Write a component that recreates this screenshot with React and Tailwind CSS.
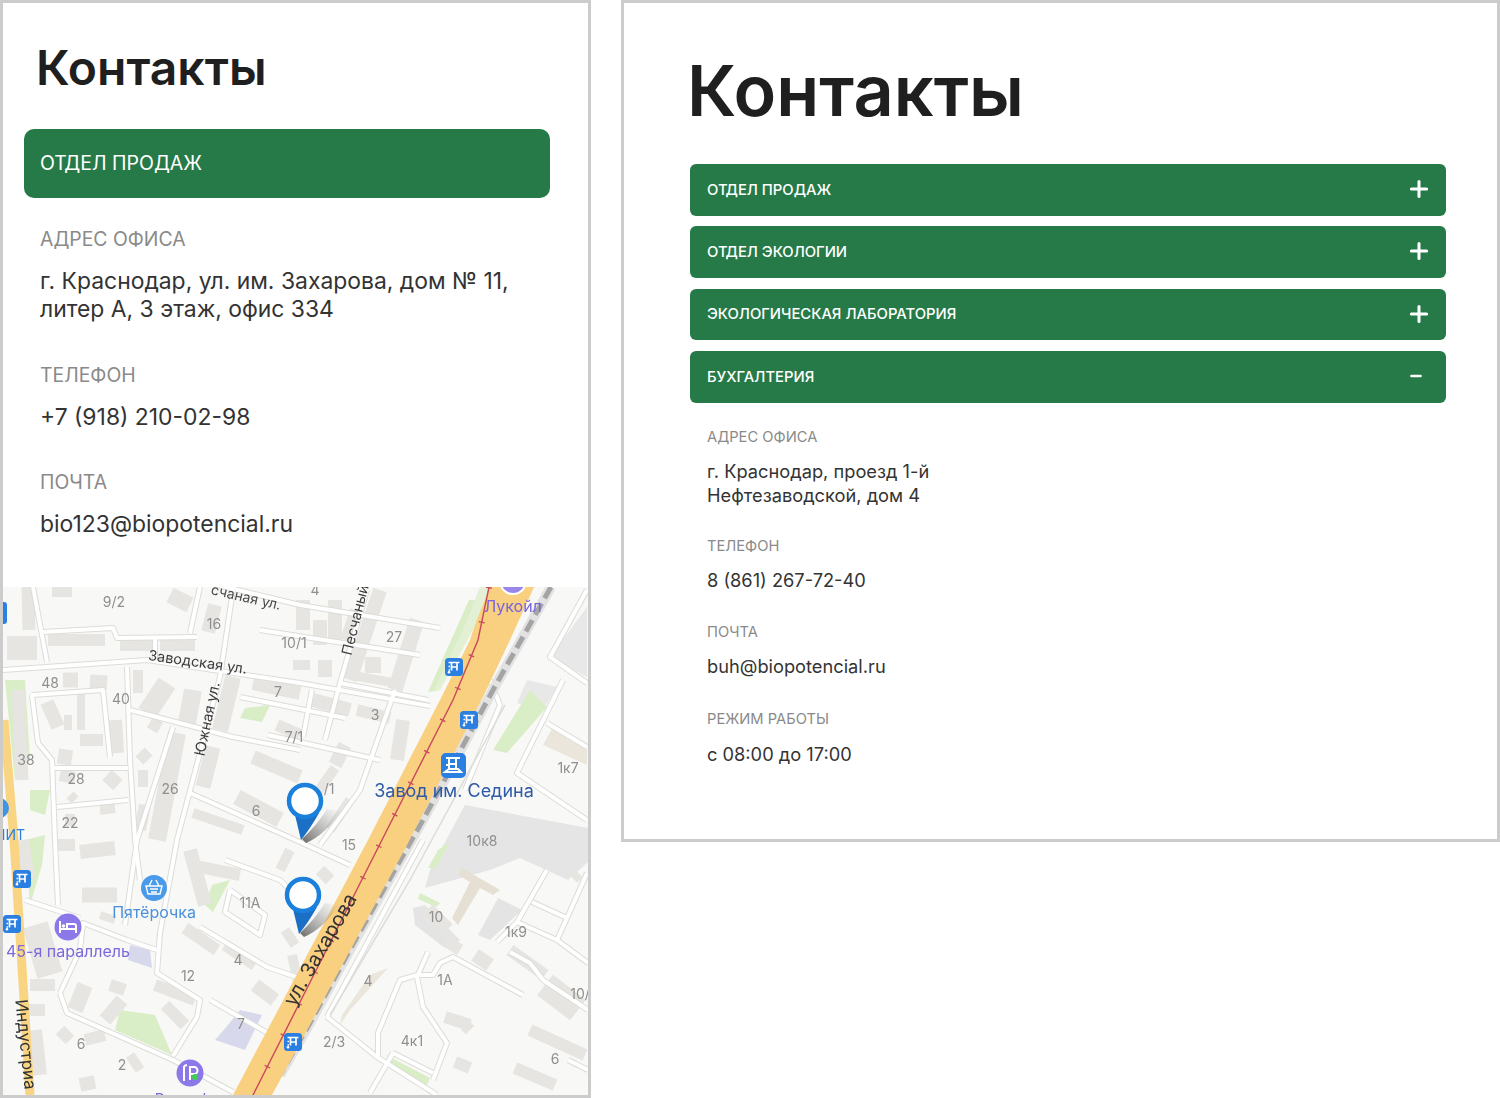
import React from 'react';
import { Plus, Minus } from 'lucide-react';

// thin streets, each one a list of screen points
const streets = [
  [[3, 670], [147, 660], [300, 683], [430, 706]],
  [[33, 587], [47, 662]],
  [[43, 632], [113, 628], [117, 638], [197, 637]],
  [[155, 638], [155, 660]],
  [[200, 587], [190, 633]],
  [[233, 590], [220, 677], [177, 840], [160, 933], [157, 973], [200, 1000], [197, 1017], [173, 1056]],
  [[60, 993], [67, 1013], [173, 1060], [233, 1092]],
  [[60, 993], [80, 950], [83, 923], [127, 940], [157, 950]],
  [[173, 727], [137, 840], [125, 925]],
  [[127, 667], [130, 760], [135, 840], [140, 880]],
  [[32, 695], [103, 690], [110, 757]],
  [[32, 695], [38, 743], [52, 760], [55, 840], [58, 905]],
  [[53, 768], [128, 768]],
  [[57, 807], [128, 800]],
  [[130, 710], [233, 737], [300, 750]],
  [[190, 793], [300, 842], [350, 865]],
  [[200, 927], [267, 967], [320, 985]],
  [[240, 697], [345, 718]],
  [[205, 582], [300, 605], [440, 628]],
  [[367, 590], [340, 683], [325, 740]],
  [[312, 690], [303, 737]],
  [[340, 683], [428, 700]],
  [[260, 630], [420, 655]],
  [[268, 735], [380, 760]],
  [[395, 690], [360, 790], [320, 845]],
  [[225, 860], [280, 880], [300, 900]],
  [[230, 890], [265, 915], [260, 935], [225, 912], [230, 890]],
  [[25, 900], [80, 918]],
  [[210, 1000], [280, 1040]],
  [[547, 870], [517, 922], [497, 942]],
  [[532, 902], [567, 918]],
  [[587, 873], [567, 918], [557, 940]],
  [[517, 922], [557, 940], [588, 963]],
  [[510, 952], [530, 963], [543, 980], [588, 1010]],
  [[523, 995], [453, 957], [440, 963], [433, 975], [417, 975], [400, 980], [378, 1033], [378, 1057]],
  [[428, 952], [417, 977], [423, 1007], [447, 1043], [433, 1080]],
  [[393, 1053], [433, 1073]],
  [[393, 1053], [370, 1093]],
  [[327, 1017], [377, 1057], [437, 1095]],
  [[423, 840], [327, 1017]],
  [[563, 680], [517, 773], [587, 820]],
  [[547, 723], [587, 747]],
  [[587, 590], [550, 657], [587, 683]],
  [[490, 680], [500, 705], [465, 790]],
  [[568, 1060], [588, 1070]],
];

// buildings, drawn as thick strokes: x1, y1, x2, y2, width
const blocks = [
  [28, 587, 29, 630, 13], [48, 640, 105, 640, 12], [120, 645, 152, 645, 12], [160, 645, 195, 645, 12],
  [7, 648, 37, 648, 24], [52, 592, 72, 592, 10], [170, 595, 190, 605, 16], [215, 605, 208, 632, 14],
  [63, 680, 78, 680, 15], [90, 682, 107, 683, 15], [138, 670, 138, 693, 10], [167, 683, 147, 713, 20],
  [193, 690, 187, 723, 18], [233, 677, 220, 730, 16], [177, 733, 157, 840, 18], [150, 722, 160, 728, 12],
  [213, 747, 203, 787, 15], [253, 683, 300, 693, 14], [253, 757, 300, 777, 14], [237, 797, 280, 820, 16],
  [193, 813, 243, 830, 10], [277, 725, 300, 735, 12], [115, 720, 117, 753, 14], [80, 740, 103, 740, 12],
  [58, 756, 72, 758, 15], [143, 770, 143, 787, 10], [140, 752, 148, 760, 13], [60, 775, 75, 778, 12],
  [107, 775, 118, 785, 14], [70, 795, 75, 800, 10], [100, 810, 115, 808, 10], [65, 820, 75, 820, 12],
  [47, 702, 58, 727, 14], [81, 693, 81, 730, 8], [68, 715, 68, 730, 8], [145, 805, 140, 830, 12],
  [18, 690, 22, 780, 13], [303, 600, 303, 630, 14], [320, 620, 320, 645, 14], [335, 600, 335, 640, 14],
  [355, 610, 345, 640, 10], [380, 590, 350, 680, 14], [417, 620, 395, 690, 15], [293, 665, 310, 665, 10],
  [325, 660, 325, 677, 14], [350, 675, 395, 683, 9], [373, 657, 373, 673, 16], [313, 700, 350, 710, 14],
  [357, 710, 390, 718, 12], [403, 720, 397, 760, 14], [345, 745, 335, 765, 14], [335, 768, 312, 800, 10],
  [350, 800, 330, 830, 10], [22, 840, 28, 880, 14], [55, 845, 75, 845, 12], [80, 852, 115, 848, 14],
  [82, 895, 117, 895, 15], [100, 915, 115, 920, 8], [190, 850, 205, 905, 14], [190, 865, 240, 875, 12],
  [185, 928, 217, 950, 12], [225, 945, 255, 965, 12], [35, 925, 50, 975, 26], [30, 985, 55, 985, 12],
  [25, 1010, 45, 1010, 12], [35, 1030, 40, 1075, 14], [85, 985, 75, 1010, 16], [110, 985, 125, 990, 12],
  [105, 1020, 122, 1000, 14], [155, 985, 195, 1000, 12], [165, 1005, 185, 1025, 12], [60, 1030, 70, 1040, 12],
  [85, 1040, 105, 1035, 12], [80, 1085, 95, 1082, 14], [130, 1055, 140, 1070, 10], [255, 985, 275, 1000, 14],
  [292, 955, 300, 990, 10], [320, 870, 330, 880, 12], [290, 850, 280, 870, 10], [427, 910, 447, 930, 16],
  [445, 940, 460, 950, 12], [475, 955, 490, 965, 14], [510, 950, 545, 975, 12], [545, 985, 578, 1010, 26],
  [530, 1030, 585, 1055, 12], [515, 1068, 555, 1085, 12], [455, 1062, 470, 1068, 12], [465, 1025, 470, 1030, 12],
  [570, 870, 580, 880, 8], [445, 1017, 470, 1025, 12], [285, 930, 295, 945, 10],
];

const greens = [
  '530,690 493,750 507,753 547,707',
  '469,600 477,600 440,690 428,692',
  '386,1055 430,1078 426,1087 391,1065',
  '420,893 440,903 436,907 418,899',
  '438,850 450,842 436,868 428,868',
  '120,1010 155,1015 172,1055 115,1030',
  '212,885 230,880 213,912 205,905',
  '5,680 25,680 30,760 20,775 15,780',
  '25,840 45,835 42,865 30,905',
  '30,790 50,790 45,815 30,810',
  '245,708 270,705 262,722 240,718',
  '390,810 410,790 385,835 372,858 365,850',
];

const labels = [
  ['9/2', 114, 607], ['16', 214, 629], ['10/1', 294, 648], ['4', 315, 595], ['27', 394, 642],
  ['48', 50, 688], ['40', 121, 704], ['7', 278, 697], ['3', 375, 720], ['7/1', 294, 742],
  ['38', 26, 765], ['28', 76, 784], ['26', 170, 794], ['6', 256, 816], ['22', 70, 828],
  ['15', 349, 850], ['1к7', 568, 773], ['10к8', 482, 846], ['11А', 250, 908], ['10', 436, 922],
  ['1к9', 516, 937], ['4', 238, 965], ['12', 188, 981], ['4', 368, 986], ['1А', 445, 985],
  ['7', 241, 1029], ['2/3', 334, 1047], ['4к1', 412, 1046], ['6', 81, 1049], ['2', 122, 1070],
  ['10/', 580, 999], ['6', 555, 1064], ['/1', 329, 794],
];

const Pin = ({ x, y }) => (
  <g>
    <path d={`M${x - 3} ${y + 38} Q${x + 12} ${y + 24} ${x + 22} ${y + 8} L${x + 36} ${y + 10} Q${x + 20} ${y + 34} ${x + 1} ${y + 42} Z`} fill="url(#pin-shadow)" />
    <path d={`M${x - 10} ${y + 14} L${x - 4} ${y + 39} Q${x + 5} ${y + 28} ${x + 14} ${y + 12} Z`} fill="#1b6fc4" />
    <circle cx={x} cy={y} r="16" fill="#fff" stroke="#1a80dc" strokeWidth="4.5" />
  </g>
);

const TransitIcon = ({ x, y, s = 18 }) => (
  <g transform={`translate(${x} ${y}) scale(${s / 18})`}>
    <rect x="0" y="0" width="18" height="18" rx="3.5" fill="#2a7fe0" />
    <path d="M3.5 4.5h11M6.5 4.5v8M12 4.5v8M3.5 8.5h1.5M3.5 12h1.5M6.5 9h5.5" stroke="#fff" strokeWidth="1.7" fill="none" />
    <circle cx="4" cy="14.2" r="1.3" fill="#fff" />
  </g>
);

const MapView = () => (
  <svg viewBox="3 587 585 508" className="block w-[585px] h-[508px] blur-[0.5px]" style={{ fontFamily: 'Inter, sans-serif' }}>
    <defs>
      <linearGradient id="pin-shadow" x1="0" y1="1" x2="1" y2="0">
        <stop offset="0" stopColor="#444" stopOpacity="0.8" />
        <stop offset="1" stopColor="#999" stopOpacity="0" />
      </linearGradient>
    </defs>
    <rect x="3" y="587" width="585" height="508" fill="#f8f8f6" />

    {/* industrial areas east of the railway */}
    <polygon points="465,805 588,828 588,862 568,880 520,858 490,870 425,888 430,870" fill="#e5e5e5" />
    <polygon points="587,607 550,657 587,677" fill="#e8e8e8" />
    <polygon points="527,680 557,687 543,710 517,703" fill="#e8e8e8" />
    <polygon points="553,727 587,745 587,765 543,745" fill="#ebe6dc" />
    <polygon points="462,868 500,890 493,895 480,888 458,925 452,918 470,882 458,875" fill="#e6e0d4" />
    <polygon points="498,898 522,910 490,940 478,935" fill="#e4e4e4" />
    <polygon points="413,908 425,905 460,940 445,948 415,925" fill="#e4e4e4" />
    <polygon points="370,975 388,968 350,1010 340,1025 342,1015" fill="#ebe6dc" />
    <polygon points="240,1010 262,1015 245,1050 215,1040 228,1025" fill="#d8d8ec" />
    <polygon points="130,945 150,950 152,968 128,960" fill="#d8d8ec" />

    {greens.map((pts) => (
      <polygon key={pts} points={pts} fill="#d9edc6" />
    ))}

    {blocks.map(([x1, y1, x2, y2, w], i) => (
      <line key={i} x1={x1} y1={y1} x2={x2} y2={y2} stroke="#e7e5e1" strokeWidth={w} />
    ))}

    {streets.map((pts, i) => (
      <polyline key={i} points={pts.join(' ')} fill="none" stroke="#dcdcd8" strokeWidth="6" strokeLinejoin="round" />
    ))}
    {streets.map((pts, i) => (
      <polyline key={i} points={pts.join(' ')} fill="none" stroke="#fff" strokeWidth="4" strokeLinejoin="round" />
    ))}

    {/* railway */}
    <polyline points="551,587 493,690 423,820 357,937 310,1023 280,1075" fill="none" stroke="#e2e2e2" strokeWidth="10" />
    <polyline points="551,587 493,690 423,820 357,937 310,1023 280,1075" fill="none" stroke="#a4a4a4" strokeWidth="5" strokeDasharray="13 6" />
    <polyline points="505,705 410,880 330,1015" fill="none" stroke="#dcdcd8" strokeWidth="1.5" />

    {/* left avenue and Zakharova street */}
    <polyline points="4,720 14,840 30,1095" fill="none" stroke="#f9d583" strokeWidth="9" />
    <polygon points="487,587 534,587 510,640 484,695 406,847 272,1095 233,1095 368,840 440,700 470,640" fill="#f9cf80" />
    <polygon points="480,587 490,587 473,630 440,690 433,692 465,625" fill="#e3f0d4" />
    <polyline points="489,587 478,640 453,700 386,832 253,1095" fill="none" stroke="#c9485b" strokeWidth="1.4" />
    <polyline points="489,587 478,640 453,700 386,832 253,1095" fill="none" stroke="#c9485b" strokeWidth="6" strokeDasharray="1.3 34" />

    {labels.map(([t, x, y]) => (
      <text key={t + x} x={x} y={y} textAnchor="middle" fontSize="14" fill="#8f8f8f">{t}</text>
    ))}

    <text x="245" y="602" textAnchor="middle" fontSize="14" fill="#4a4a4a" transform="rotate(13 245 602)">счаная ул.</text>
    <text x="197" y="667" textAnchor="middle" fontSize="14.5" fill="#3d3d3d" transform="rotate(8 197 667)">Заводская ул.</text>
    <text x="212" y="720" textAnchor="middle" fontSize="14.5" fill="#3d3d3d" transform="rotate(-78 212 720)">Южная ул.</text>
    <text x="360" y="621" textAnchor="middle" fontSize="14.5" fill="#3d3d3d" transform="rotate(-76 360 621)">Песчаный</text>
    <text x="326" y="953" textAnchor="middle" fontSize="20" fill="#333" transform="rotate(-60 326 953)">ул. Захарова</text>
    <text x="20" y="1045" textAnchor="middle" fontSize="17" fill="#333" transform="rotate(84 20 1045)">Индустриа</text>

    <text x="513" y="612" textAnchor="middle" fontSize="16" fill="#7a63e0">Лукойл</text>
    <text x="454" y="797" textAnchor="middle" fontSize="18" fill="#2e5aa8">Завод им. Седина</text>
    <text x="154" y="918" textAnchor="middle" fontSize="16" fill="#4a90dc">Пятёрочка</text>
    <text x="68" y="957" textAnchor="middle" fontSize="16" fill="#7c68dc">45-я параллель</text>
    <text x="25" y="840" textAnchor="end" fontSize="14" fill="#2a7fe0">НИТ</text>
    <text x="190" y="1104" textAnchor="middle" fontSize="15" fill="#7c68dc">Роснефть</text>

    <TransitIcon x={445} y={658} />
    <TransitIcon x={460} y={711} />
    <TransitIcon x={13} y={870} />
    <TransitIcon x={3} y={915} />
    <TransitIcon x={284} y={1033} />
    <rect x="0" y="602" width="7" height="22" rx="3" fill="#2a7fe0" />
    <circle cx="-1" cy="808" r="10" fill="#3f94e6" />

    {/* station */}
    <g transform="translate(441 753)">
      <rect width="25" height="25" rx="5" fill="#2a7fe0" />
      <path d="M5 5h14M8 5v11M15 5v11M5 12h3M8 11h8M4 19h16l-3-3H8z" stroke="#fff" strokeWidth="2" fill="none" />
    </g>

    {/* Lukoil pin, cut by the top of the map */}
    <circle cx="513" cy="581" r="13" fill="#9a86ea" stroke="#fff" strokeWidth="2" />

    {/* Pyaterochka */}
    <circle cx="154" cy="888" r="13" fill="#4a9aea" />
    <path d="M146 886h16l-2 8h-12zM149 886l3-6M159 886l-3-6M150 889h8M151 892h6" stroke="#fff" strokeWidth="1.4" fill="none" />

    {/* hotel */}
    <circle cx="68" cy="927" r="13.5" fill="#8d78ea" />
    <path d="M60 921v12M60 929h16v4M76 929v-3a2 2 0 0 0-2-2h-7v5" stroke="#fff" strokeWidth="2" fill="none" />
    <circle cx="63.5" cy="926" r="1.8" fill="#fff" />

    {/* fuel */}
    <circle cx="190" cy="1073" r="13.5" fill="#8d78ea" />
    <path d="M184 1081v-15M184 1066l3-1M190 1080v-13h4a3 3 0 0 1 0 7h-4" stroke="#fff" strokeWidth="2" fill="none" />
    <circle cx="195" cy="1077" r="3" fill="#3fcf4f" />

    <Pin x={305} y={801} />
    <Pin x={303} y={895} />
  </svg>
);

const Field = ({ label, children, className }) => (
  <div className={className}>
    <div className="text-[19.4px] leading-[28px] text-[#8a8a8a]">{label}</div>
    <div className="mt-[14px] text-[22.9px] leading-[28px] text-[#333]">{children}</div>
  </div>
);

const SmallField = ({ label, children, className }) => (
  <div className={className}>
    <div className="text-[14.7px] leading-[20px] text-[#8a8a8a]">{label}</div>
    <div className="mt-[12.5px] text-[18.25px] leading-[24px] text-[#333]">{children}</div>
  </div>
);

const sections = ['ОТДЕЛ ПРОДАЖ', 'ОТДЕЛ ЭКОЛОГИИ', 'ЭКОЛОГИЧЕСКАЯ ЛАБОРАТОРИЯ'];

export default function App() {
  return (
    <div className="flex items-start w-[1500px] h-[1098px] bg-white font-['Inter',sans-serif]">
      <div className="flex flex-col w-[591px] h-[1098px] border-[3px] border-[#cccccc] overflow-hidden">
        <h1 className="ml-[33px] mt-[36px] text-[48px] leading-[58px] font-semibold text-[#1f1f1f]">Контакты</h1>
        <div className="flex items-center ml-[21px] mt-[32px] w-[526px] h-[69px] pl-[16px] rounded-[10px] bg-[#267a48] text-[19.5px] text-white">
          ОТДЕЛ ПРОДАЖ
        </div>
        <div className="ml-[37px] mr-[40px]">
          <Field label="АДРЕС ОФИСА" className="mt-[27px]">
            г. Краснодар, ул. им. Захарова, дом № 11,<br />литер А, 3 этаж, офис 334
          </Field>
          <Field label="ТЕЛЕФОН" className="mt-[38px]">+7 (918) 210-02-98</Field>
          <Field label="ПОЧТА" className="mt-[37px]">bio123@biopotencial.ru</Field>
        </div>
        <div className="mt-auto">
          <MapView />
        </div>
      </div>

      <div className="ml-[30px] w-[879px] h-[842px] border-[3px] border-[#cccccc]">
        <h1 className="ml-[63px] mt-[45px] text-[70.2px] leading-[86px] font-semibold text-[#1f1f1f]">Контакты</h1>
        <div className="flex flex-col gap-[10.8px] ml-[66px] mt-[30px] w-[756px]">
          {sections.map((name) => (
            <div key={name} className="flex items-center justify-between h-[51.6px] pl-[17px] pr-[14px] rounded-[6px] bg-[#267a48] text-[14.8px] font-medium text-white">
              {name}
              <Plus className="w-[26px] h-[26px] -translate-y-px" strokeWidth={2.8} />
            </div>
          ))}
          <div className="flex items-center justify-between h-[51.6px] pl-[17px] pr-[22px] rounded-[6px] bg-[#267a48] text-[14.8px] font-medium text-white">
            БУХГАЛТЕРИЯ
            <Minus className="w-[16px] h-[16px] -translate-y-px" strokeWidth={3.6} />
          </div>
        </div>
        <div className="ml-[83px]">
          <SmallField label="АДРЕС ОФИСА" className="mt-[24px]">
            г. Краснодар, проезд 1-й<br />Нефтезаводской, дом 4
          </SmallField>
          <SmallField label="ТЕЛЕФОН" className="mt-[28.5px]">8 (861) 267-72-40</SmallField>
          <SmallField label="ПОЧТА" className="mt-[29.5px]">buh@biopotencial.ru</SmallField>
          <SmallField label="РЕЖИМ РАБОТЫ" className="mt-[31px]">с 08:00 до 17:00</SmallField>
        </div>
      </div>
    </div>
  );
}
